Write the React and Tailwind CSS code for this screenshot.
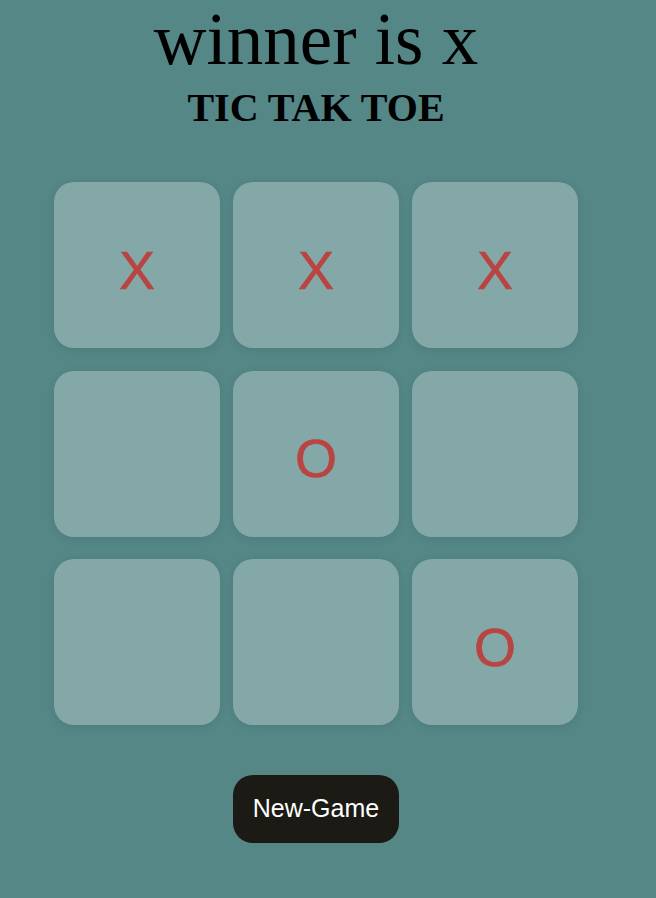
import { useState } from 'react';

function Cell({ value, onClick }) {
  return (
    <button
      onClick={onClick}
      className="flex h-[166px] w-[166px] items-center justify-center rounded-[20px] bg-[#84a8a7] pt-[10px] font-['Liberation_Sans',Arial,sans-serif] text-[54px] text-[#b94442] [-webkit-text-stroke:0.6px_#b94442] shadow-[0_2px_10px_rgba(0,0,0,0.08)]"
    >
      {value}
    </button>
  );
}

export default function App() {
  const [board, setBoard] = useState(['X', 'X', 'X', '', 'O', '', '', '', 'O']);

  return (
    <div className="min-h-[898px] w-full bg-[#548786] pr-[24px]">
      <div className="flex flex-col items-center font-['Liberation_Serif','Times_New_Roman',serif] text-black">
        <h2 className="text-[73px] leading-[80px] font-normal">winner is x</h2>
        <h1 className="mt-[6px] text-[40px] leading-[44px] font-bold">TIC TAK TOE</h1>
        <div className="mt-[52px] grid grid-cols-3 gap-x-[13px] gap-y-[22.5px]">
          {board.map((v, i) => (
            <Cell
              key={i}
              value={v}
              onClick={() => {
                if (v) return;
                const next = [...board];
                next[i] = 'X';
                setBoard(next);
              }}
            />
          ))}
        </div>
        <button
          onClick={() => setBoard(Array(9).fill(''))}
          className="mt-[50px] h-[68px] w-[166px] rounded-[20px] bg-[#1b1a15] font-['Liberation_Sans',Arial,sans-serif] text-[25px] text-white"
        >
          New-Game
        </button>
      </div>
    </div>
  );
}
